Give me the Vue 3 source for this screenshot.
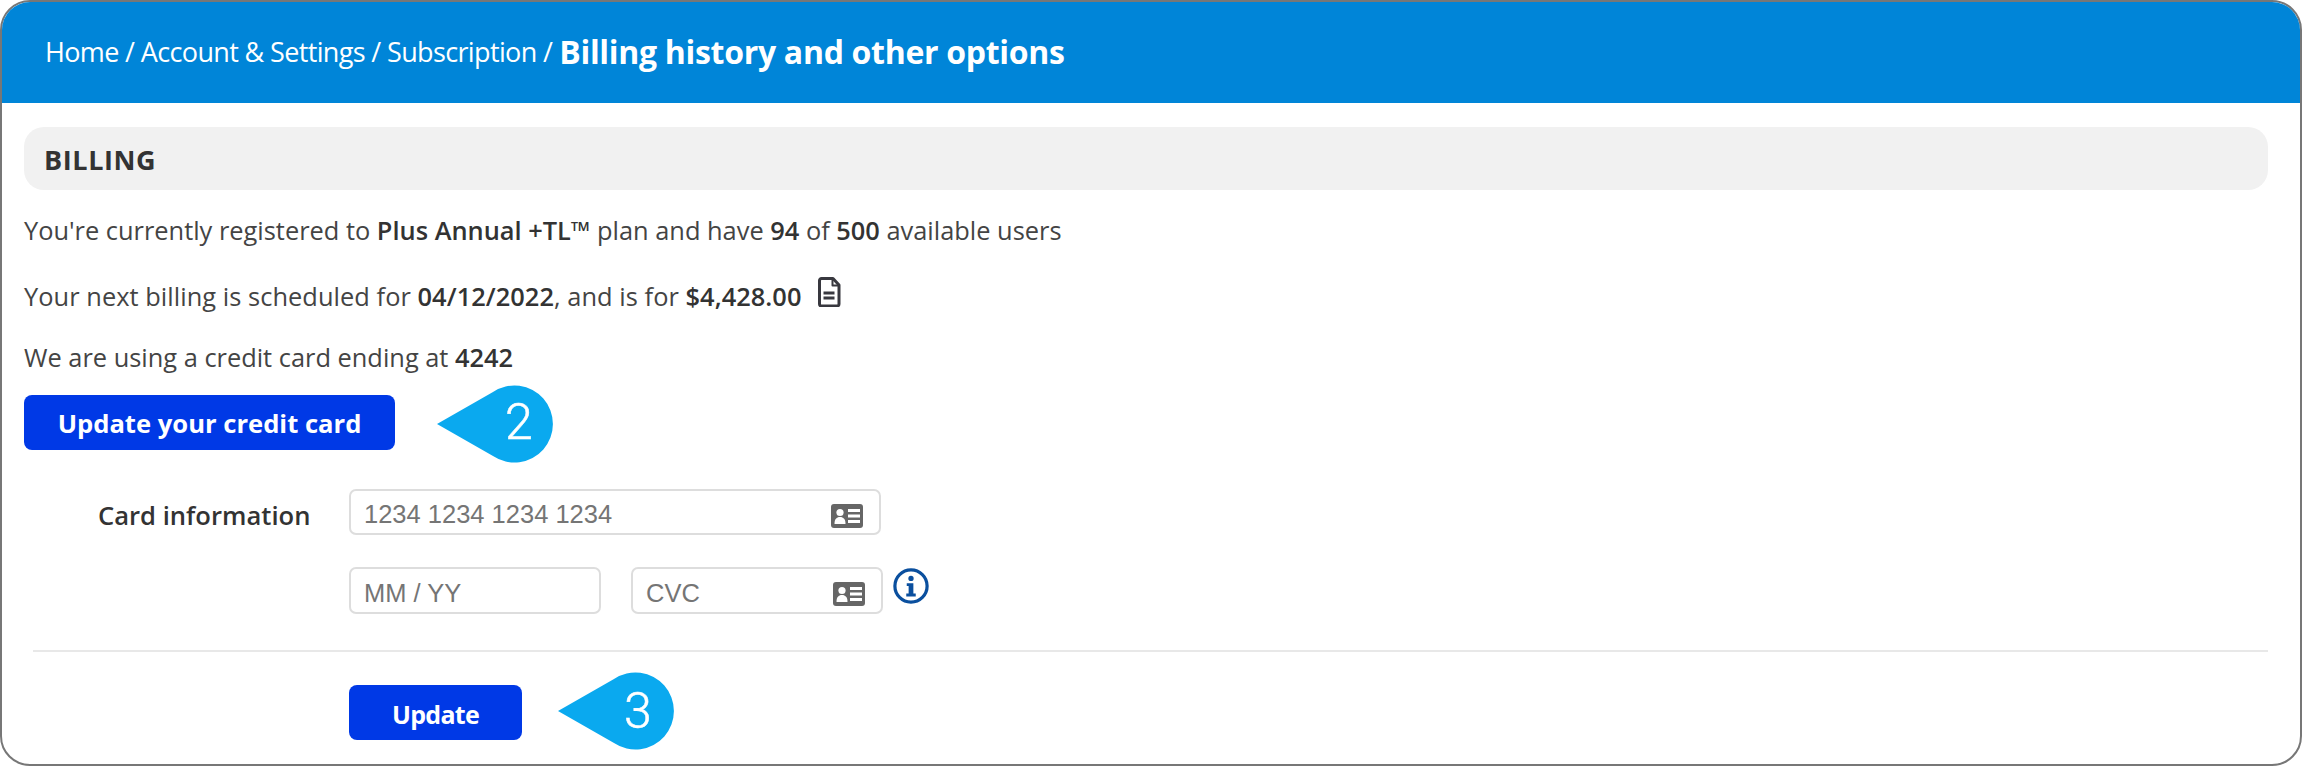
<script setup>
const lines = [
  { id: 1, parts: [["You're currently registered to ", 0], ["Plus Annual +TL™", 1], [" plan and have ", 0], ["94", 1], [" of ", 0], ["500", 1], [" available users", 0]] },
  { id: 2, doc: true, parts: [["Your next billing is scheduled for ", 0], ["04/12/2022", 1], [", and is for ", 0], ["$4,428.00", 1]] },
  { id: 3, parts: [["We are using a credit card ending at ", 0], ["4242", 1]] }
]
</script>

<template>
  <div class="card">
    <header class="head">
      <span>Home / Account &amp; Settings / Subscription / </span><strong>Billing history and other options</strong>
    </header>
    <main class="body">
      <h2 class="section">BILLING</h2>
      <p v-for="l in lines" :key="l.id" class="line" :class="'line' + l.id">
        <template v-for="(p, i) in l.parts" :key="i"><b v-if="p[1]">{{ p[0] }}</b><template v-else>{{ p[0] }}</template></template>
        <svg v-if="l.doc" class="doc" viewBox="0 0 24 30" width="24" height="30" fill="none" stroke="#38383f" stroke-width="3" stroke-linejoin="round">
          <path d="M2.5 3.5a2 2 0 0 1 2-2h11.5l6 6.5v19a2 2 0 0 1-2 2h-15.500a2 2 0 0 1-2-2z" />
          <path d="M15.500 2v6.500h6" stroke-width="2" />
          <path d="M6.500 16h11M6.500 21h11" />
        </svg>
      </p>
      <div class="action first">
        <button class="btn wide">Update your credit card</button>
        <svg class="callout" viewBox="0 0 118 78" width="118" height="78">
          <path d="M0 39 L56 7 A38.500 38.500 0 1 1 56 71 Z" fill="#0aa9ef" />
        </svg>
        <span class="num">2</span>
      </div>
      <div class="form">
        <label class="label">Card information</label>
        <div class="fields">
          <div class="input full">
            <span>1234 1234 1234 1234</span>
            <svg class="cc" viewBox="0 0 32 24" width="32" height="24">
              <rect width="32" height="24" rx="3" fill="#666" />
              <circle cx="9" cy="8.500" r="3.600" fill="#fff" />
              <path d="M3.500 20c0-5 2-7 5.500-7s5.500 2 5.500 7z" fill="#fff" />
              <path d="M17 5h12v3H17zM17 10.500h12v3H17zM17 16h12v3H17z" fill="#fff" />
            </svg>
          </div>
          <div class="row">
            <div class="input half"><span>MM / YY</span></div>
            <div class="input half cvc">
              <span>CVC</span>
              <svg class="cc" viewBox="0 0 32 24" width="32" height="24">
                <rect width="32" height="24" rx="3" fill="#666" />
                <circle cx="9" cy="8.500" r="3.600" fill="#fff" />
                <path d="M3.500 20c0-5 2-7 5.500-7s5.500 2 5.500 7z" fill="#fff" />
                <path d="M17 5h12v3H17zM17 10.500h12v3H17zM17 16h12v3H17z" fill="#fff" />
              </svg>
            </div>
            <svg class="info" viewBox="0 0 38 38" width="36" height="36">
              <circle cx="19" cy="19" r="17" fill="#fff" stroke="#0a4f9e" stroke-width="3.400" />
              <circle cx="19" cy="11" r="2.800" fill="#0a4f9e" />
              <path d="M14.500 16h7v11h2.500v3h-10v-3h2.500v-8h-2z" fill="#0a4f9e" />
            </svg>
          </div>
        </div>
      </div>
      <hr class="rule" />
      <div class="action second">
        <button class="btn small">Update</button>
        <svg class="callout" viewBox="0 0 118 78" width="118" height="78">
          <path d="M0 39 L56 7 A38.500 38.500 0 1 1 56 71 Z" fill="#0aa9ef" />
        </svg>
        <span class="num">3</span>
      </div>
    </main>
  </div>
</template>

<style>
html, body { margin: 0; background: #fff; }
</style>

<style scoped>
.card {
  position: relative;
  box-sizing: border-box;
  width: 2302px;
  height: 766px;
  border: 2px solid #777;
  border-radius: 30px;
  overflow: hidden;
  background: #fff;
  font-family: "Open Sans", sans-serif;
  color: #444;
}
.head {
  box-sizing: border-box;
  height: 101px;
  padding: 0 0 3px 43px;
  display: flex;
  align-items: center;
  gap: 7px;
  background: #0085d8;
  color: #fff;
  font-size: 27px;
  letter-spacing: -0.64px;
}
.head strong { font-size: 32px; font-weight: 700; letter-spacing: -0.3px; }
.body { padding: 24px 32px 0 22px; }
.section {
  box-sizing: border-box;
  height: 63px;
  margin: 0;
  padding: 2px 0 0 20px;
  display: flex;
  align-items: center;
  background: #f1f1f1;
  border-radius: 20px;
  color: #333;
  font-size: 27px;
  font-weight: 700;
  letter-spacing: 0.6px;
}
.line {
  margin: 0;
  display: flex;
  align-items: center;
  height: 34px;
  font-size: 25.4px;
  white-space: pre;
}
.line b { font-weight: 600; color: #333; }
.line1 { margin-top: 23px; }
.line2 { margin-top: 32px; letter-spacing: 0.05px; }
.line3 { margin-top: 27px; }
.doc { margin-left: 16px; margin-bottom: 8px; }
.action { display: flex; align-items: center; position: relative; }
.first { margin-top: 21px; height: 55px; }
.second { margin: 33px 0 0 325px; height: 55px; }
.btn {
  box-sizing: border-box;
  height: 100%;
  border: 0;
  border-radius: 8px;
  background: #0039e6;
  color: #fff;
  font-family: inherit;
  font-size: 25.6px;
  font-weight: 700;
  padding: 2px 0 0;
}
.wide { width: 371px; }
.small { width: 173px; font-size: 25px; letter-spacing: -0.7px; }
.callout { margin-left: 42px; margin-top: 2px; flex: none; }
.second .callout { margin-left: 36px; margin-top: -3px; }
.num {
  position: absolute;
  color: #fff;
  font-family: Roboto, sans-serif;
  font-size: 50px;
  font-weight: 300;
  -webkit-text-stroke: 0.5px #fff;
  line-height: 56px;
  top: -1px;
}
.first .num { left: 481px; }
.second .num { left: 275px; top: -2px; }
.form { display: flex; margin-top: 39px; }
.label {
  box-sizing: border-box;
  width: 325px;
  padding: 9px 0 0 74px;
  font-size: 25.6px;
  font-weight: 600;
  color: #333;
}
.fields { display: flex; flex-direction: column; gap: 32px; }
.row { display: flex; align-items: flex-start; gap: 30px; }
.input {
  box-sizing: border-box;
  height: 47px;
  border: 2px solid #ddd;
  border-radius: 7px;
  display: flex;
  align-items: center;
  justify-content: space-between;
  padding: 0 16px 0 13px;
  font-family: "Liberation Sans", Arial, sans-serif;
  font-size: 25.5px;
  color: #757575;
  background: #fff;
}
.input span { padding-top: 5px; }
.cc { margin-top: 7px; }
.full { width: 532px; height: 46px; }
.half { width: 252px; }
.info { margin: 1px 0 0 -20px; }
.rule {
  height: 0;
  margin: 36px 0 0 9px;
  border: 0;
  border-top: 2px solid #e8e8e8;
}
</style>
